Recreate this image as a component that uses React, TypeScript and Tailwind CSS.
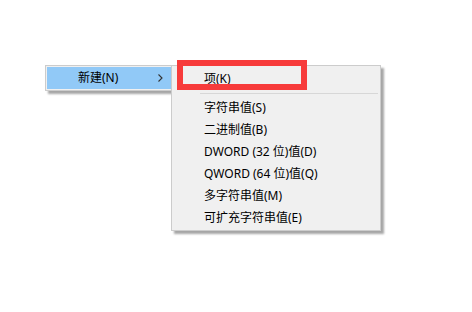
const ITEMS = [
  "字符串值(S)",
  "二进制值(B)",
  "DWORD (32 位)值(D)",
  "QWORD (64 位)值(Q)",
  "多字符串值(M)",
  "可扩充字符串值(E)",
];

const Chevron = () => (
  <svg width="5" height="8" viewBox="0 0 5 8" className="block">
    <path d="M0.5 0.5 L4 4 L0.5 7.5" fill="none" stroke="#333" strokeWidth="1.1" />
  </svg>
);

export default function App() {
  return (
    <div className="relative w-[472px] h-[312px] bg-white overflow-hidden font-['Noto_Sans','Noto_Sans_CJK_SC',sans-serif] text-[12px] text-black">
      {/* parent menu */}
      <div className="absolute left-[45px] top-[65px] w-[128px] border border-[#cccccc] bg-[#f0f0f0] p-[1px] shadow-[3px_3px_2px_rgba(0,0,0,0.35)]">
        <div className="flex h-[22px] items-center bg-[#91c9f7] pl-[31px] pr-[8px]">
          <span className="flex-1 leading-[22px]">新建(N)</span>
          <Chevron />
        </div>
      </div>

      {/* submenu */}
      <div className="absolute left-[171px] top-[65px] w-[210px] border border-[#cccccc] bg-[#f0f0f0] pt-[2px] pb-[1px] shadow-[3px_3px_2px_rgba(0,0,0,0.35)]">
        <div className="h-[22px] pl-[32px] leading-[22px]">项(K)</div>
        <div className="flex h-[7px] items-center pl-[28px] pr-[2px]">
          <div className="h-px w-full bg-[#d7d7d7]" />
        </div>
        {ITEMS.map((t) => (
          <div key={t} className="h-[22px] pl-[32px] leading-[22px] whitespace-nowrap">
            {t}
          </div>
        ))}
      </div>

      {/* highlight annotation */}
      <div className="absolute left-[177px] top-[60px] w-[130px] h-[30px] border-[6px] border-[#f73b3b]" />
    </div>
  );
}
